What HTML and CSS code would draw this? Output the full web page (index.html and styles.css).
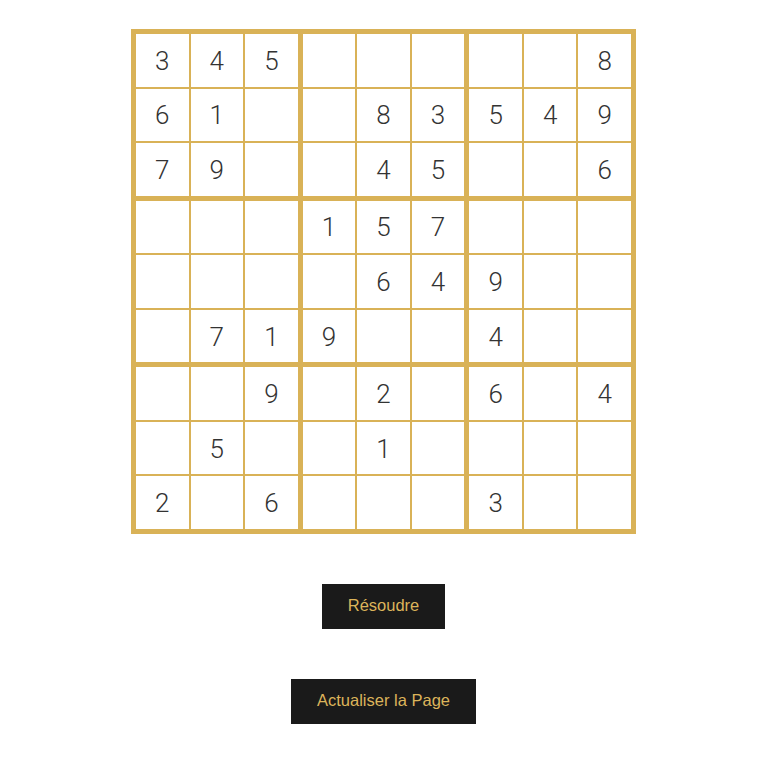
FILE: index.html
```html
<!DOCTYPE html>
<html lang="fr">
<head>
<meta charset="utf-8">
<title>Sudoku</title>
<link rel="stylesheet" href="styles.css">
</head>
<body>
<main class="page">
  <div class="board">
    <div class="box"><div class="cell">3</div><div class="cell">4</div><div class="cell">5</div><div class="cell">6</div><div class="cell">1</div><div class="cell"></div><div class="cell">7</div><div class="cell">9</div><div class="cell"></div></div>
    <div class="box"><div class="cell"></div><div class="cell"></div><div class="cell"></div><div class="cell"></div><div class="cell">8</div><div class="cell">3</div><div class="cell"></div><div class="cell">4</div><div class="cell">5</div></div>
    <div class="box"><div class="cell"></div><div class="cell"></div><div class="cell">8</div><div class="cell">5</div><div class="cell">4</div><div class="cell">9</div><div class="cell"></div><div class="cell"></div><div class="cell">6</div></div>
    <div class="box"><div class="cell"></div><div class="cell"></div><div class="cell"></div><div class="cell"></div><div class="cell"></div><div class="cell"></div><div class="cell"></div><div class="cell">7</div><div class="cell">1</div></div>
    <div class="box"><div class="cell">1</div><div class="cell">5</div><div class="cell">7</div><div class="cell"></div><div class="cell">6</div><div class="cell">4</div><div class="cell">9</div><div class="cell"></div><div class="cell"></div></div>
    <div class="box"><div class="cell"></div><div class="cell"></div><div class="cell"></div><div class="cell">9</div><div class="cell"></div><div class="cell"></div><div class="cell">4</div><div class="cell"></div><div class="cell"></div></div>
    <div class="box"><div class="cell"></div><div class="cell"></div><div class="cell">9</div><div class="cell"></div><div class="cell">5</div><div class="cell"></div><div class="cell">2</div><div class="cell"></div><div class="cell">6</div></div>
    <div class="box"><div class="cell"></div><div class="cell">2</div><div class="cell"></div><div class="cell"></div><div class="cell">1</div><div class="cell"></div><div class="cell"></div><div class="cell"></div><div class="cell"></div></div>
    <div class="box"><div class="cell">6</div><div class="cell"></div><div class="cell">4</div><div class="cell"></div><div class="cell"></div><div class="cell"></div><div class="cell">3</div><div class="cell"></div><div class="cell"></div></div>
  </div>
  <button class="btn btn-solve" type="button">Résoudre</button>
  <button class="btn btn-refresh" type="button">Actualiser la Page</button>
</main>
</body>
</html>
```
FILE: styles.css
```css
html, body {
  margin: 0;
  padding: 0;
  background: #ffffff;
}

.page {
  display: flex;
  flex-direction: column;
  align-items: center;
  padding-top: 29px;
  padding-left: 2px;
}

.board {
  width: 505px;
  height: 505px;
  box-sizing: border-box;
  background: #d9b257;
  padding: 5px;
  display: grid;
  grid-template-columns: repeat(3, 1fr);
  grid-template-rows: repeat(3, 1fr);
  gap: 5px;
}

.box {
  display: grid;
  grid-template-columns: repeat(3, 1fr);
  grid-template-rows: repeat(3, 1fr);
  gap: 2px;
}

.cell {
  background: #ffffff;
  display: flex;
  align-items: center;
  justify-content: center;
  padding-top: 1px;
  font-family: Roboto, "Noto Sans", sans-serif;
  font-weight: 300;
  font-size: 26px;
  color: #333333;
}

.btn {
  background: #1a1a1a;
  color: #dcb45a;
  border: none;
  border-radius: 0;
  font-family: "Liberation Sans", Arial, sans-serif;
  font-size: 16.5px;
  height: 45px;
  box-sizing: border-box;
  padding: 0 26px 2px;
  cursor: pointer;
}

.btn-solve {
  margin-top: 50px;
}

.btn-refresh {
  margin-top: 50px;
}
```
